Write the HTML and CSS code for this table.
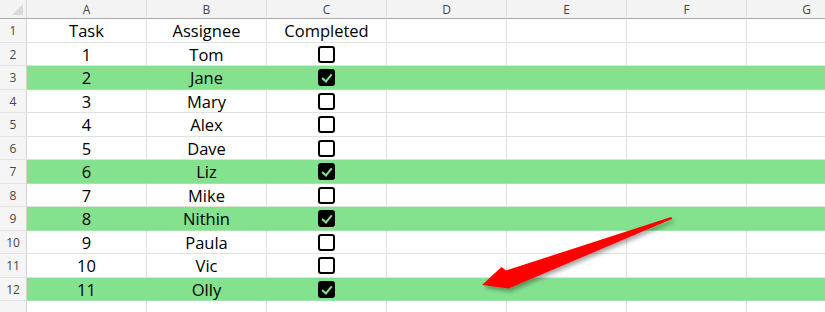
FILE: index.html
```html
<!DOCTYPE html>
<html lang="en">
<head>
<meta charset="utf-8">
<title>Task tracker</title>
<link rel="stylesheet" href="styles.css">
</head>
<body>
<div class="sheet">
  <div class="corner"></div>
  <div class="col-head">A</div>
  <div class="col-head">B</div>
  <div class="col-head">C</div>
  <div class="col-head">D</div>
  <div class="col-head">E</div>
  <div class="col-head">F</div>
  <div class="col-head">G</div>

  <div class="row-head">1</div>
  <div class="cell">Task</div><div class="cell">Assignee</div><div class="cell">Completed</div>
  <div class="cell"></div><div class="cell"></div><div class="cell"></div><div class="cell"></div>

  <div class="row-head">2</div>
  <div class="cell">1</div><div class="cell">Tom</div><div class="cell"><span class="box"></span></div>
  <div class="cell"></div><div class="cell"></div><div class="cell"></div><div class="cell"></div>

  <div class="row-head">3</div>
  <div class="cell done">2</div><div class="cell done">Jane</div><div class="cell done"><span class="box checked"></span></div>
  <div class="cell done"></div><div class="cell done"></div><div class="cell done"></div><div class="cell done"></div>

  <div class="row-head">4</div>
  <div class="cell">3</div><div class="cell">Mary</div><div class="cell"><span class="box"></span></div>
  <div class="cell"></div><div class="cell"></div><div class="cell"></div><div class="cell"></div>

  <div class="row-head">5</div>
  <div class="cell">4</div><div class="cell">Alex</div><div class="cell"><span class="box"></span></div>
  <div class="cell"></div><div class="cell"></div><div class="cell"></div><div class="cell"></div>

  <div class="row-head">6</div>
  <div class="cell">5</div><div class="cell">Dave</div><div class="cell"><span class="box"></span></div>
  <div class="cell"></div><div class="cell"></div><div class="cell"></div><div class="cell"></div>

  <div class="row-head">7</div>
  <div class="cell done">6</div><div class="cell done">Liz</div><div class="cell done"><span class="box checked"></span></div>
  <div class="cell done"></div><div class="cell done"></div><div class="cell done"></div><div class="cell done"></div>

  <div class="row-head">8</div>
  <div class="cell">7</div><div class="cell">Mike</div><div class="cell"><span class="box"></span></div>
  <div class="cell"></div><div class="cell"></div><div class="cell"></div><div class="cell"></div>

  <div class="row-head">9</div>
  <div class="cell done">8</div><div class="cell done">Nithin</div><div class="cell done"><span class="box checked"></span></div>
  <div class="cell done"></div><div class="cell done"></div><div class="cell done"></div><div class="cell done"></div>

  <div class="row-head">10</div>
  <div class="cell">9</div><div class="cell">Paula</div><div class="cell"><span class="box"></span></div>
  <div class="cell"></div><div class="cell"></div><div class="cell"></div><div class="cell"></div>

  <div class="row-head">11</div>
  <div class="cell">10</div><div class="cell">Vic</div><div class="cell"><span class="box"></span></div>
  <div class="cell"></div><div class="cell"></div><div class="cell"></div><div class="cell"></div>

  <div class="row-head">12</div>
  <div class="cell done">11</div><div class="cell done">Olly</div><div class="cell done"><span class="box checked"></span></div>
  <div class="cell done"></div><div class="cell done"></div><div class="cell done"></div><div class="cell done"></div>

  <div class="row-head"></div>
  <div class="cell"></div><div class="cell"></div><div class="cell"></div>
  <div class="cell"></div><div class="cell"></div><div class="cell"></div><div class="cell"></div>
</div>

<svg class="arrow" width="825" height="312" viewBox="0 0 825 312" aria-hidden="true">
  <defs>
    <filter id="arrow-shadow" x="-20%" y="-50%" width="140%" height="200%">
      <feDropShadow dx="2" dy="3" stdDeviation="2" flood-color="#000" flood-opacity="0.35"/>
    </filter>
  </defs>
  <polygon filter="url(#arrow-shadow)" fill="#ff0000"
           points="482,285 501.5,267 506,270.5 671,217 672.5,218.8 508.5,288.5"/>
</svg>
</body>
</html>
```

FILE: styles.css
```css
html, body {
  margin: 0;
  padding: 0;
  background: #ffffff;
}

body {
  width: 825px;
  height: 312px;
  overflow: hidden;
  position: relative;
  font-family: "Open Sans", "Noto Sans", sans-serif;
}

.sheet {
  display: grid;
  grid-template-columns: 27px repeat(7, 120px);
  grid-template-rows: 19px repeat(13, 23.5px);
}

.corner {
  background: #f3f3f3;
  border-right: 1px solid #d6d6d6;
  border-bottom: 1px solid #a9a9a9;
  box-sizing: border-box;
  position: relative;
}

.corner::after {
  content: "";
  position: absolute;
  right: 3px;
  bottom: 3px;
  width: 0;
  height: 0;
  border-left: 11px solid transparent;
  border-bottom: 11px solid #d9d9d9;
}

.col-head {
  background: #f3f3f3;
  border-right: 1px solid #dcdcdc;
  border-bottom: 1px solid #a9a9a9;
  box-sizing: border-box;
  color: #454545;
  font-size: 12px;
  display: flex;
  align-items: center;
  justify-content: center;
  padding-top: 1px;
}

.row-head {
  background: #f5f5f5;
  border-right: 1px solid #d6d6d6;
  border-bottom: 1px solid #e2e2e2;
  box-sizing: border-box;
  color: #454545;
  font-size: 12px;
  display: flex;
  align-items: center;
  justify-content: center;
  padding-top: 1px;
}

.cell {
  border-right: 1px solid #e1e1e1;
  border-bottom: 1px solid #e1e1e1;
  box-sizing: border-box;
  color: #000;
  font-size: 16.5px;
  display: flex;
  align-items: center;
  justify-content: center;
  padding-top: 1px;
  white-space: nowrap;
}

.cell.done {
  background: #84e28f;
  border-right-color: #84e28f;
  border-bottom-color: #9fe6a8;
}

.box {
  width: 17px;
  height: 17px;
  box-sizing: border-box;
  border: 2px solid #000;
  border-radius: 3px;
  background: #fff;
  position: relative;
}

.box.checked {
  background: #000;
}

.box.checked::after {
  content: "";
  position: absolute;
  left: 4px;
  top: 1px;
  width: 4px;
  height: 8px;
  border-right: 2px solid #84e28f;
  border-bottom: 2px solid #84e28f;
  transform: rotate(40deg);
}

.arrow {
  position: absolute;
  left: 0;
  top: 0;
  pointer-events: none;
}
```
